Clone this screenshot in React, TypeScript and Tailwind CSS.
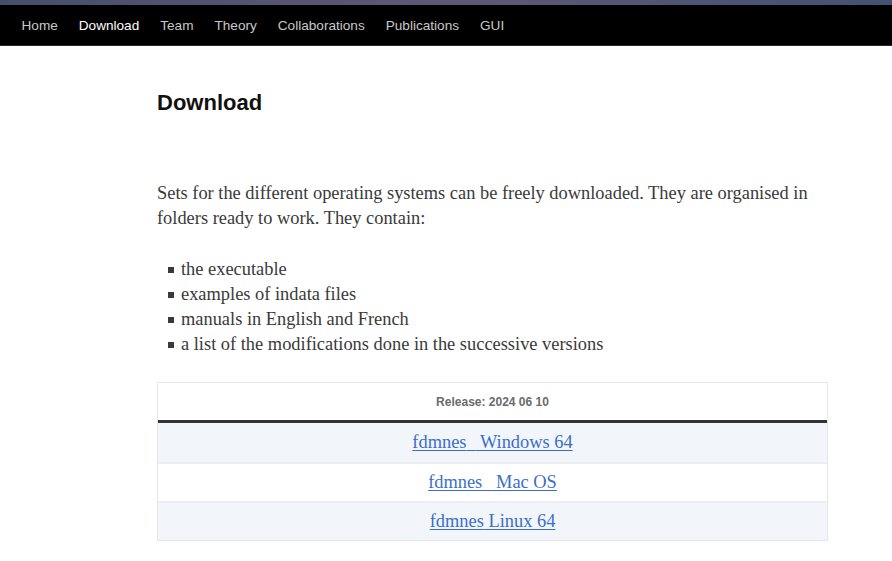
const NAV = ['Home', 'Download', 'Team', 'Theory', 'Collaborations', 'Publications', 'GUI'];

const ITEMS = [
  'the executable',
  'examples of indata files',
  'manuals in English and French',
  'a list of the modifications done in the successive versions',
];

// [before, hidden underscore?, after]
const LINKS: [string, boolean, string][] = [
  ['fdmnes', true, ' Windows 64'],
  ['fdmnes', true, ' Mac OS'],
  ['fdmnes', false, ' Linux 64'],
];

export default function App() {
  return (
    <div className="min-h-[561px] bg-white font-['Liberation_Sans',Arial,sans-serif]">
      {/* banner strip */}
      <div className="h-[5px] bg-gradient-to-r from-[#464e6c] via-[#5e5878] to-[#435270]" />

      {/* nav */}
      <nav className="flex h-[41px] items-center bg-black px-[11px] pt-[2px] border-b border-[#2a2a2a]">
        {NAV.map((n) => (
          <a
            key={n}
            className={`px-[10.5px] text-[13.6px] ${n === 'Download' ? 'text-white' : 'text-[#c8c8c8]'}`}
          >
            {n}
          </a>
        ))}
      </nav>

      <main className="ml-[157px] w-[671px] pt-[43px]">
        <h1 className="text-[22px] font-bold leading-[28px] text-[#111]">Download</h1>

        <p className="mt-[64px] font-['Liberation_Serif',Georgia,serif] text-[18.4px] leading-[25px] text-[#3a3a3a]">
          Sets for the different operating systems can be freely downloaded. They are organised in
          folders ready to work. They contain:
        </p>

        <ul className="mt-[26px] font-['Liberation_Serif',Georgia,serif] text-[18.4px] leading-[25px] text-[#3a3a3a]">
          {ITEMS.map((it) => (
            <li key={it} className="flex items-center">
              <span className="ml-[11px] mr-[7px] h-[6px] w-[6px] bg-[#3a3a3a]" />
              {it}
            </li>
          ))}
        </ul>

        <div className="mt-[25px] border border-[#e6e6e6]">
          <div className="flex h-[40px] items-center justify-center border-b-[3px] border-[#333] text-[12px] font-bold text-[#6b6b6b]">
            Release: 2024 06 10
          </div>
          {LINKS.map(([a, us, b], i) => (
            <div
              key={b}
              className={`flex h-[39px] items-center justify-center ${i > 0 ? 'border-t-2 border-[#eceef2]' : ''} ${i % 2 === 0 ? 'bg-[#f2f5fa]' : 'bg-white'}`}
            >
              <a className="whitespace-pre font-['Liberation_Serif',Georgia,serif] text-[18.4px] text-[#3a6fc8] underline underline-offset-2">
                {a}
                {us && <span className="text-transparent">_</span>}
                {b}
              </a>
            </div>
          ))}
        </div>
      </main>
    </div>
  );
}
